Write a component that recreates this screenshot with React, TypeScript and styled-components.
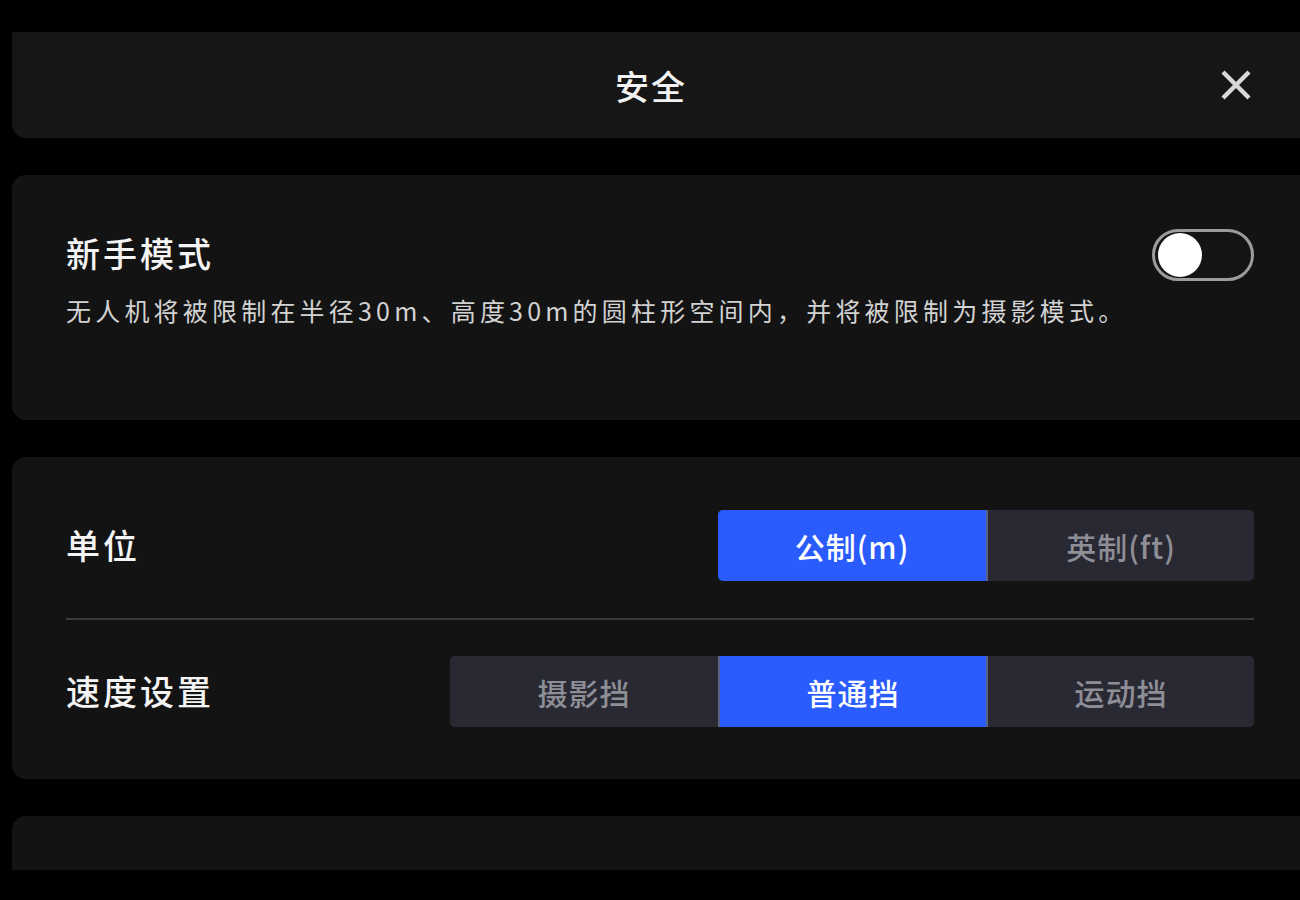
import React, { useState } from "react";
import styled, { createGlobalStyle } from "styled-components";

const GlobalStyle = createGlobalStyle`
  html, body { margin: 0; padding: 0; background: #000; }
  body { font-family: "Noto Sans CJK SC", "Noto Sans", sans-serif; }
  * { box-sizing: border-box; }
`;

const Screen = styled.div`
  width: 1300px;
  height: 870px;
  overflow: hidden;
  padding: 32px 0 0 12px;
  display: flex;
  flex-direction: column;
  gap: 37px;
  background: #000;
`;

const Header = styled.header`
  flex: 0 0 106px;
  background: #161616;
  border-radius: 0 0 0 14px;
  display: flex;
  align-items: center;
  justify-content: center;
  position: relative;
  padding-right: 10px;
`;

const HeaderTitle = styled.h1`
  margin: 0;
  color: #f2f2f2;
  font-size: 34px;
  font-weight: 500;
  letter-spacing: 2px;
`;

const CloseButton = styled.button`
  position: absolute;
  right: 46px;
  top: 50%;
  transform: translateY(-50%);
  width: 36px;
  height: 36px;
  padding: 0;
  border: none;
  background: transparent;
  display: flex;
  align-items: center;
  justify-content: center;
  cursor: pointer;
`;

const Card = styled.section`
  flex: 0 0 auto;
  background: #131313;
  border-radius: 14px 0 0 14px;
  padding: 53px 46px 52px 54px;
  display: flex;
  flex-direction: column;
`;

const NoviceCard = styled(Card)`
  height: 245px;
  padding-top: 54px;
`;

const ToggleRow = styled.div`
  display: flex;
  align-items: center;
  justify-content: space-between;
  height: 52px;
`;

const Label = styled.div`
  color: #f4f4f4;
  font-size: 34px;
  font-weight: 500;
  letter-spacing: 3px;
  line-height: 1.2;
`;

const ToggleLabel = styled(Label)`
  margin-top: -4px;
`;

const Description = styled.p`
  margin: 11px 0 0;
  color: #d2d2d2;
  font-size: 25px;
  line-height: 36px;
  letter-spacing: 4.2px;
  font-weight: 400;
`;

const Switch = styled.button<{ $on: boolean }>`
  width: 102px;
  height: 52px;
  border-radius: 26px;
  border: 3px solid #9c9c9c;
  background: ${(p) => (p.$on ? "#2a5bfd" : "#141414")};
  padding: 0 3px;
  display: flex;
  align-items: center;
  justify-content: ${(p) => (p.$on ? "flex-end" : "flex-start")};
  cursor: pointer;
`;

const Knob = styled.span`
  width: 44px;
  height: 44px;
  border-radius: 50%;
  background: #ffffff;
  display: block;
`;

const SettingRow = styled.div`
  display: flex;
  align-items: center;
  justify-content: space-between;
  height: 71px;
`;

const Divider = styled.div`
  height: 2px;
  background: #3a3a3c;
  margin: 37px 0 36px;
`;

const Segmented = styled.div`
  display: flex;
  height: 71px;
  border-radius: 5px;
  overflow: hidden;
  background: #292934;
`;

const Segment = styled.button<{ $active: boolean }>`
  width: 268px;
  height: 100%;
  border: none;
  padding: 0;
  background: ${(p) => (p.$active ? "#2a5bfd" : "#292934")};
  color: ${(p) => (p.$active ? "#ffffff" : "#8e8e96")};
  font-family: "Noto Sans CJK SC", "Noto Sans", sans-serif;
  font-size: 30px;
  font-weight: 500;
  letter-spacing: 1px;
  cursor: pointer;
  & + & {
    border-left: 2px solid #5c6284;
  }
`;

const BottomCard = styled.section`
  flex: 1 0 120px;
  background: #131313;
  border-radius: 14px 0 0 0;
`;

const CloseIcon = () => (
  <svg width="32" height="32" viewBox="0 0 32 32">
    <path d="M3 3 L29 29 M29 3 L3 29" stroke="#d8d8d8" strokeWidth="4.5" strokeLinecap="butt" />
  </svg>
);

export default function App() {
  const [novice, setNovice] = useState(false);
  const [unit, setUnit] = useState(0);
  const [speed, setSpeed] = useState(1);
  const units = ["公制(m)", "英制(ft)"];
  const speeds = ["摄影挡", "普通挡", "运动挡"];
  return (
    <>
      <GlobalStyle />
      <Screen>
        <Header>
          <HeaderTitle>安全</HeaderTitle>
          <CloseButton aria-label="close">
            <CloseIcon />
          </CloseButton>
        </Header>
        <NoviceCard>
          <ToggleRow>
            <ToggleLabel>新手模式</ToggleLabel>
            <Switch $on={novice} onClick={() => setNovice(!novice)}>
              <Knob />
            </Switch>
          </ToggleRow>
          <Description>无人机将被限制在半径30m、高度30m的圆柱形空间内，并将被限制为摄影模式。</Description>
        </NoviceCard>
        <Card>
          <SettingRow>
            <Label>单位</Label>
            <Segmented>
              {units.map((u, i) => (
                <Segment key={u} $active={unit === i} onClick={() => setUnit(i)}>
                  {u}
                </Segment>
              ))}
            </Segmented>
          </SettingRow>
          <Divider />
          <SettingRow>
            <Label>速度设置</Label>
            <Segmented>
              {speeds.map((s, i) => (
                <Segment key={s} $active={speed === i} onClick={() => setSpeed(i)}>
                  {s}
                </Segment>
              ))}
            </Segmented>
          </SettingRow>
        </Card>
        <BottomCard />
      </Screen>
    </>
  );
}
